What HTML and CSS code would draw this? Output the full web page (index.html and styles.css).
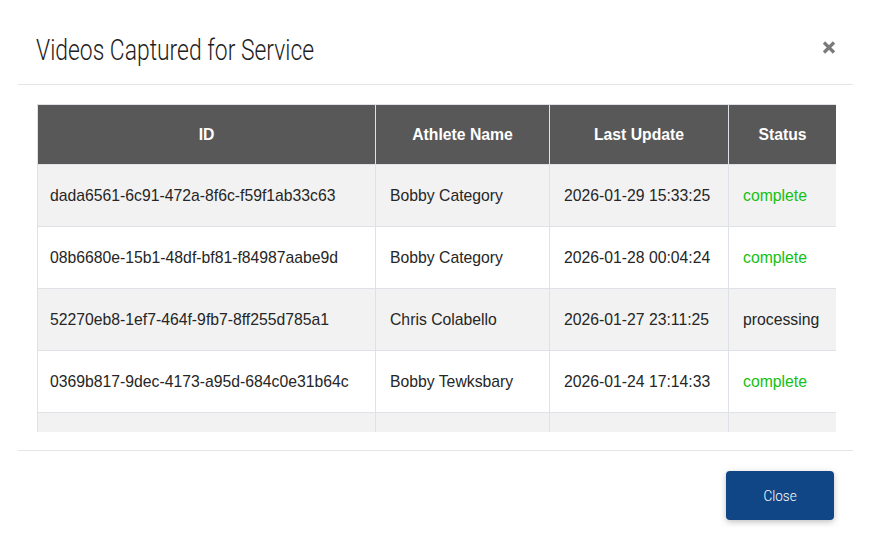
FILE: index.html
```html
<!DOCTYPE html>
<html>
<head>
<meta charset="utf-8">
<link rel="stylesheet" href="styles.css">
</head>
<body>
<div class="modal">
  <div class="modal-header">
    <h1 class="title">Videos Captured for Service</h1>
    <button class="x-btn" aria-label="Close">
      <svg width="14" height="13" viewBox="0 0 14 13"><path d="M2 1.5 L12 11.5 M12 1.5 L2 11.5" stroke="#7a7a7a" stroke-width="3.2" stroke-linecap="butt"/></svg>
    </button>
  </div>
  <div class="modal-body">
    <div class="scroll">
      <table class="grid">
        <colgroup>
          <col class="c-id"><col class="c-name"><col class="c-date"><col class="c-status">
        </colgroup>
        <thead>
          <tr><th>ID</th><th>Athlete Name</th><th>Last Update</th><th>Status</th></tr>
        </thead>
        <tbody>
          <tr><td>dada6561-6c91-472a-8f6c-f59f1ab33c63</td><td>Bobby Category</td><td>2026-01-29 15:33:25</td><td class="ok">complete</td></tr>
          <tr><td>08b6680e-15b1-48df-bf81-f84987aabe9d</td><td>Bobby Category</td><td>2026-01-28 00:04:24</td><td class="ok">complete</td></tr>
          <tr><td>52270eb8-1ef7-464f-9fb7-8ff255d785a1</td><td>Chris Colabello</td><td>2026-01-27 23:11:25</td><td>processing</td></tr>
          <tr><td>0369b817-9dec-4173-a95d-684c0e31b64c</td><td>Bobby Tewksbary</td><td>2026-01-24 17:14:33</td><td class="ok">complete</td></tr>
          <tr><td></td><td></td><td></td><td></td></tr>
        </tbody>
      </table>
    </div>
  </div>
  <div class="modal-footer">
    <button class="btn-close"><span class="btn-label">Close</span></button>
  </div>
</div>
</body>
</html>
```

FILE: styles.css
```css
html, body {
  margin: 0;
  padding: 0;
  background: #fff;
}
body {
  font-family: "Liberation Sans", Arial, sans-serif;
  color: #333;
}
.modal {
  width: 835px;
  margin-left: 18px;
}
.modal-header {
  height: 85px;
  box-sizing: border-box;
  padding: 35px 17px 0 18px;
  display: flex;
  justify-content: space-between;
  align-items: flex-start;
  border-bottom: 1px solid #e5e5e5;
}
.title {
  margin: 0;
  font-family: Roboto, sans-serif;
  font-weight: 300;
  font-size: 30px;
  line-height: 30px;
  color: #1e1e1e;
  white-space: nowrap;
  transform: scaleX(0.763);
  transform-origin: 0 0;
}
.x-btn {
  border: 0;
  background: none;
  padding: 0;
  margin-top: 6px;
  width: 14px;
  height: 13px;
  display: block;
}
.x-btn svg { display: block; }
.modal-body {
  padding: 19px 17px 18px 19px;
}
.scroll {
  height: 328px;
  overflow: hidden;
}
.grid {
  width: 799px;
  table-layout: fixed;
  border-collapse: collapse;
  font-size: 15.75px;
}
.c-id { width: 338px; }
.c-name { width: 174px; }
.c-date { width: 179px; }
.c-status { width: 108px; }
.grid th {
  background: #585858;
  color: #fff;
  font-weight: bold;
  text-align: center;
  height: 59px;
  padding: 0;
  border: 1px solid #dee2e6;
  border-bottom: 0;
}
.grid td {
  height: 61px;
  padding: 0 0 0 14px;
  border: 1px solid #dee2e6;
  color: #262626;
  white-space: nowrap;
  overflow: hidden;
}
.grid td:first-child { padding-left: 12px; }
.grid tbody tr:nth-child(odd) td { background: #f2f2f2; }
.grid tbody tr:nth-child(even) td { background: #fff; }
.grid td.ok { color: #12c112; }
.modal-footer {
  border-top: 1px solid #e5e5e5;
  padding: 20px 19px 20px 0;
  display: flex;
  justify-content: flex-end;
}
.btn-close {
  width: 108px;
  height: 49px;
  background: #104586;
  color: #fff;
  border: 0;
  border-radius: 4px;
  box-shadow: 0 2px 6px rgba(0,0,0,0.25);
  font-family: Roboto, sans-serif;
  font-weight: 300;
  font-size: 15.5px;
  padding: 0;
  display: flex;
  align-items: center;
  justify-content: center;
}
.btn-label {
  display: inline-block;
  transform: scaleX(0.87);
}
```
